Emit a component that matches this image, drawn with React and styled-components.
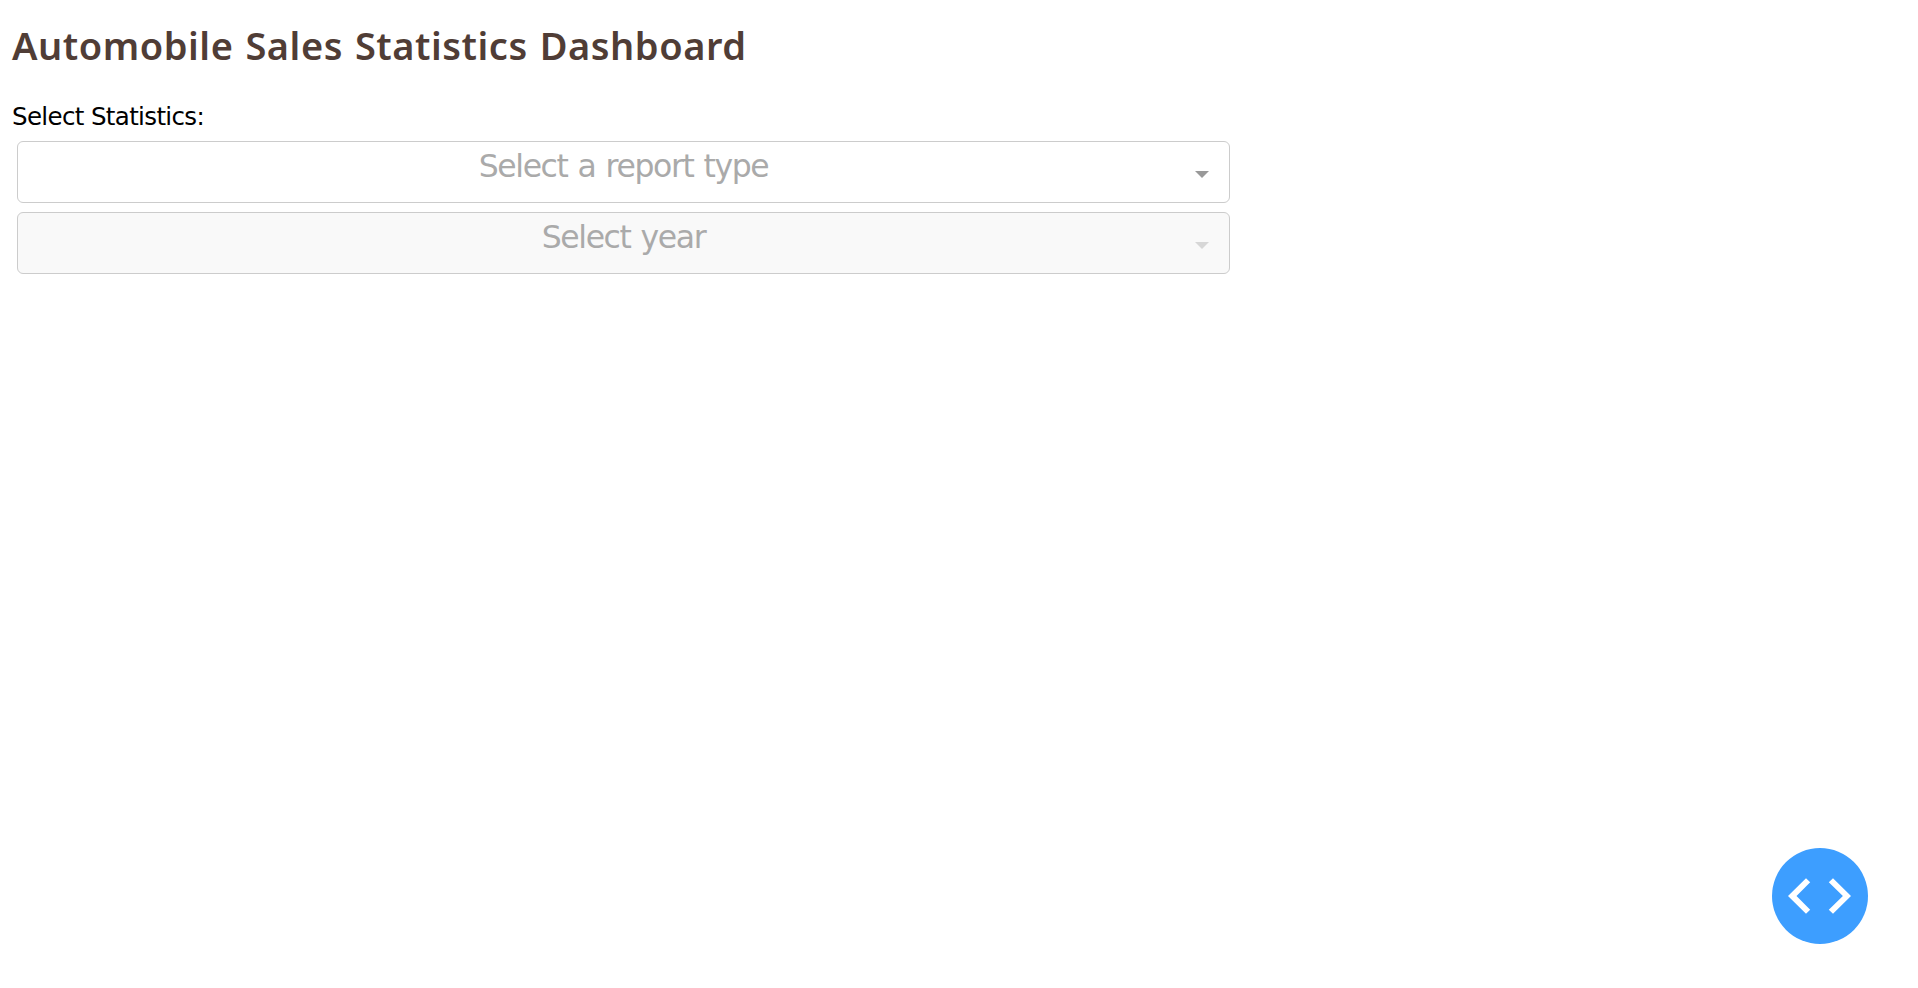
import React from "react";
import styled, { createGlobalStyle } from "styled-components";

const GlobalStyle = createGlobalStyle`
  body {
    margin: 0;
    background: #fff;
    font-family: "DejaVu Sans", sans-serif;
  }
`;

const Page = styled.main`
  box-sizing: border-box;
  min-height: 988px;
  padding: 20px 12px 0;
`;

const Title = styled.h1`
  margin: 0;
  height: 80px;
  line-height: 51px;
  font-family: "Noto Sans", sans-serif;
  font-size: 38px;
  letter-spacing: 0.53px;
  word-spacing: 1.6px;
  font-weight: 600;
  color: #503d36;
  white-space: nowrap;
`;

const Label = styled.label`
  display: block;
  height: 41px;
  line-height: 33px;
  font-size: 24.5px;
  letter-spacing: -0.64px;
  color: #000;
`;

const Fields = styled.div`
  display: flex;
  flex-direction: column;
  gap: 9px;
  width: 1213px;
  margin-left: 5px;
`;

const Select = styled.div`
  box-sizing: border-box;
  display: grid;
  grid-template-columns: 1fr;
  height: 62px;
  border: 1px solid #ccc;
  border-radius: 6px;
  background: ${({ $disabled }) => ($disabled ? "#f9f9f9" : "#fff")};
`;

const Placeholder = styled.span`
  grid-area: 1 / 1;
  justify-self: center;
  line-height: 48px;
  font-size: 31.5px;
  letter-spacing: -1.4px;
  word-spacing: 1.5px;
  color: #aaa;
`;

const Arrow = styled.span`
  grid-area: 1 / 1;
  justify-self: end;
  width: 0;
  height: 0;
  margin: 29px 20px 0 0;
  border: 7px solid transparent;
  border-top-color: #999;
  border-bottom: 0;
  opacity: ${({ $disabled }) => ($disabled ? 0.35 : 1)};
`;

const DevButton = styled.button`
  position: fixed;
  right: 50px;
  bottom: 44px;
  width: 96px;
  height: 96px;
  padding: 0;
  border: 0;
  border-radius: 50%;
  background: #3d9eff;
  svg { display: block; }
`;

function Dropdown({ text, disabled }) {
  return (
    <Select $disabled={disabled}>
      <Placeholder>{text}</Placeholder>
      <Arrow $disabled={disabled} />
    </Select>
  );
}

export default function App() {
  return (
    <Page>
      <GlobalStyle />
      <Title>Automobile Sales Statistics Dashboard</Title>
      <Label>Select Statistics:</Label>
      <Fields>
        <Dropdown text="Select a report type" />
        <Dropdown text="Select year" disabled />
      </Fields>
      <DevButton aria-label="Developer tools">
        <svg width="96" height="96" viewBox="0 0 96 96" fill="#fff">
          <path d="M34 30.2 38.2 34.2 24.5 48 38.2 61.8 34 65.8 16 48z" />
          <path d="M61 30.2 56.8 34.2 70.9 48 56.8 61.8 61 65.8 79 48z" />
        </svg>
      </DevButton>
    </Page>
  );
}
